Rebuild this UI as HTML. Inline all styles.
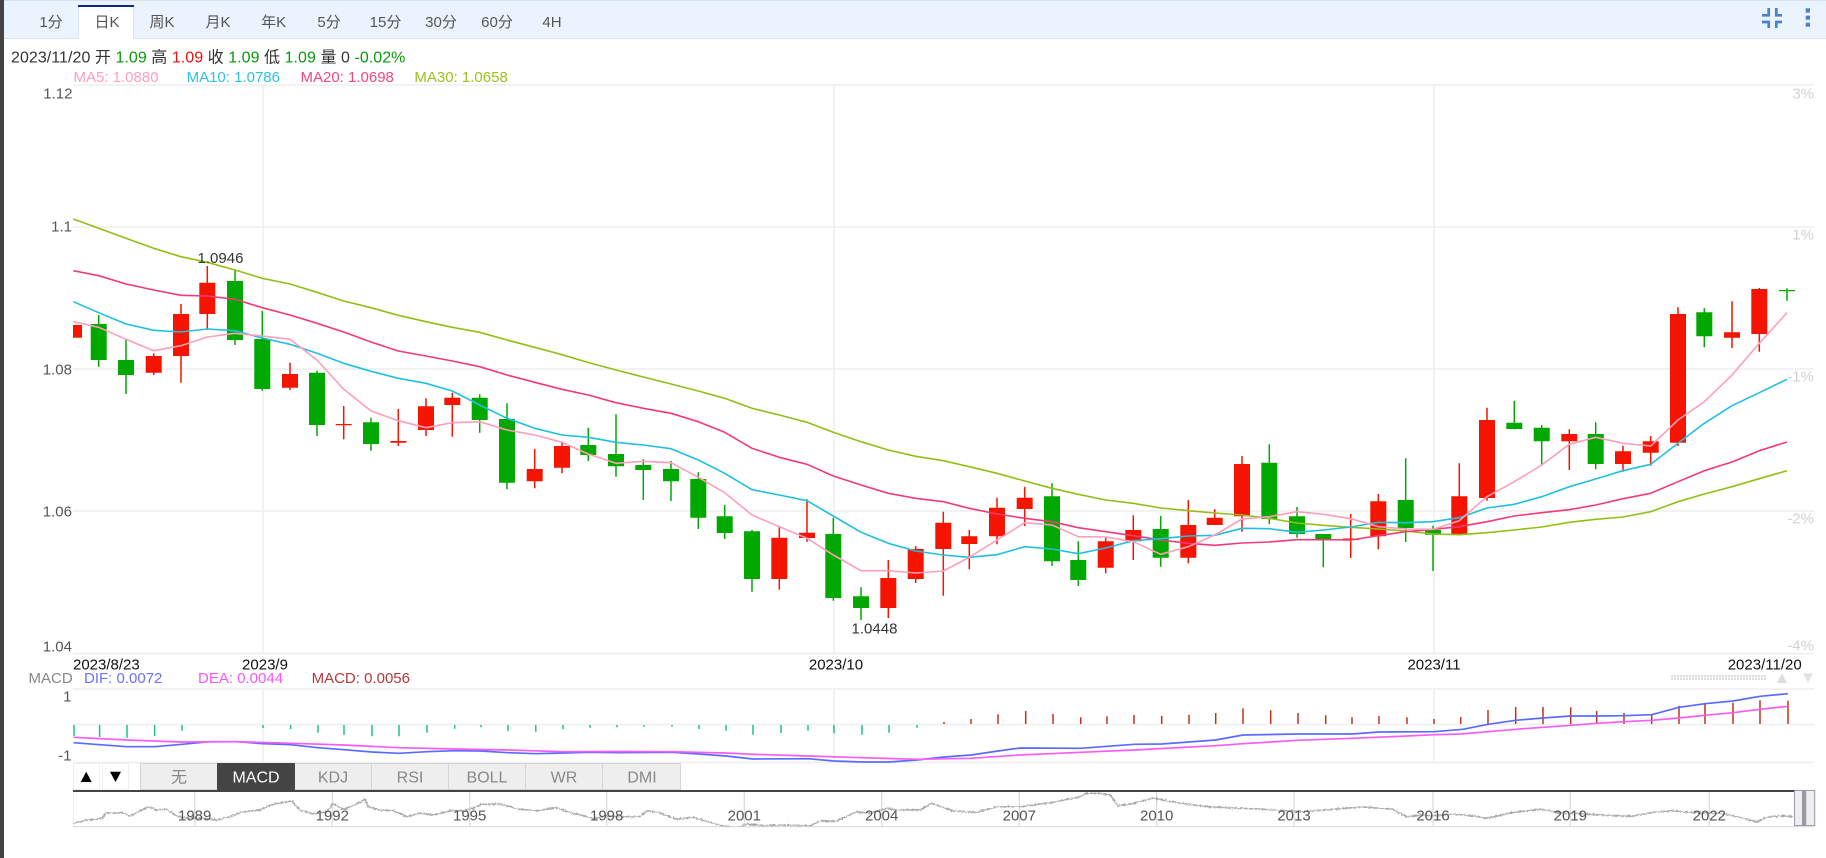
<!DOCTYPE html>
<html>
<head>
<meta charset="utf-8">
<style>
html,body{margin:0;padding:0;width:1826px;height:858px;background:#fff;overflow:hidden}
svg{display:block;position:absolute;left:0;top:0}
text{font-family:"Liberation Sans","Noto Sans CJK SC",sans-serif}
</style>
</head>
<body>
<svg width="1826" height="858" viewBox="0 0 1826 858" xmlns="http://www.w3.org/2000/svg">
<defs>
<clipPath id="navclip"><rect x="73" y="792" width="1722" height="34.5"/></clipPath>
<filter id="jit" filterUnits="userSpaceOnUse" x="60" y="780" width="1760" height="60">
<feTurbulence type="fractalNoise" baseFrequency="0.55" numOctaves="2" seed="4" result="n"/>
<feDisplacementMap in="SourceGraphic" in2="n" scale="3.5" xChannelSelector="R" yChannelSelector="G"/>
</filter>
<pattern id="dots" width="3" height="3" patternUnits="userSpaceOnUse"><rect width="2" height="2" fill="#dcdcdc"/></pattern>
</defs>

<rect x="0" y="0" width="4" height="858" fill="#444"/>

<!-- toolbar -->
<rect x="4" y="0" width="1822" height="38" fill="#ebf3fe"/>
<rect x="4" y="0" width="1822" height="1" fill="#d5e0f2"/>
<rect x="4" y="38" width="1822" height="1" fill="#d9e5f5"/>
<rect x="78" y="5" width="56" height="34" fill="#fff"/>
<rect x="78" y="5" width="1" height="34" fill="#d9e5f5"/>
<rect x="133" y="5" width="1" height="34" fill="#d9e5f5"/>
<rect x="78" y="5" width="56" height="2" fill="#0d2a85"/>
<g font-size="15" fill="#555" text-anchor="middle">
<text x="51" y="27">1分</text><text x="107" y="27">日K</text><text x="162" y="27">周K</text><text x="218" y="27">月K</text><text x="273.6" y="27">年K</text><text x="329" y="27">5分</text><text x="385.5" y="27">15分</text><text x="441" y="27">30分</text><text x="497" y="27">60分</text><text x="552" y="27">4H</text>
</g>
<!-- collapse icon -->
<path d="M1762 15.3H1768.7V8M1782 15.3H1776.3V8M1762 22H1768.7V28M1782 22H1776.3V28" fill="none" stroke="#4a80d0" stroke-width="2.7"/>
<rect x="1805.7" y="8.3" width="4.3" height="4.3" fill="#4a80d0"/>
<rect x="1805.7" y="15.7" width="4.3" height="4" fill="#4a80d0"/>
<rect x="1805.7" y="22.7" width="4.3" height="4" fill="#4a80d0"/>

<!-- info -->
<text x="11" y="62.5" font-size="16" fill="#333" letter-spacing="0.05" xml:space="preserve">2023/11/20 开 <tspan fill="#0a9a0a">1.09</tspan> 高 <tspan fill="#f01010">1.09</tspan> 收 <tspan fill="#0a9a0a">1.09</tspan> 低 <tspan fill="#0a9a0a">1.09</tspan> 量 0 <tspan fill="#0a9a0a">-0.02%</tspan></text>
<g font-size="15">
<text x="73.5" y="82" fill="#ff9ebf">MA5: 1.0880</text>
<text x="186.6" y="82" fill="#2bc4e0">MA10: 1.0786</text>
<text x="300.5" y="82" fill="#f5457f">MA20: 1.0698</text>
<text x="414.4" y="82" fill="#9ac21c">MA30: 1.0658</text>
</g>

<!-- grid -->
<g stroke="#eee" stroke-width="1.5" fill="none">
<path d="M73 85H1814M73 227H1814M73 369H1814M73 511H1814M73 653.5H1814"/>
<path d="M263 85V653M834 85V653M1434 85V653"/>
<path d="M73 689H1814M73 724.5H1814M73 762.5H1814"/>
<path d="M263 689V762M834 689V762M1434 689V762"/>
</g>

<!-- axis labels -->
<g font-size="15" fill="#555" text-anchor="end">
<text x="72.5" y="98.5">1.12</text>
<text x="72" y="231.5">1.1</text>
<text x="72" y="374.5">1.08</text>
<text x="72" y="516.5">1.06</text>
<text x="72" y="651.5">1.04</text>
<text x="71.5" y="701.5">1</text>
<text x="71.5" y="760.5">-1</text>
</g>
<g font-size="15" fill="#d2d2d2" text-anchor="end">
<text x="1814" y="98.5">3%</text>
<text x="1814" y="239.5">1%</text>
<text x="1814" y="381.5">-1%</text>
<text x="1814" y="523.5">-2%</text>
<text x="1814" y="650.5">-4%</text>
</g>

<!-- candles wicks -->
<path fill="none" stroke="#f51400" stroke-width="1.5" d="M153.7 353.3V375M181 304V382.7M207.3 266V330M290 362.7V390M343.7 406V439.3M398.3 409V446M426 398.3V436M452.3 392.7V436.7M534.7 449V488.3M562 441.7V473.3M779.3 526.7V589.7M807 499.3V541.7M888.3 560V618M915.7 546V583M943.3 511.7V595.7M969.3 530V569.3M997 497.7V544.3M1024.7 487V526M1105.7 537.7V573.3M1133.3 515.3V560M1188.3 500V563.3M1214.7 509.3V525M1242 456V531.7M1350.7 514V558M1378.3 494V549.3M1459.3 463.3V534M1487 407.7V500.7M1569.3 429.3V470M1623 445.7V471.7M1650.7 436V465.7M1678 307.3V446M1732 301.3V348M1759.3 288V351.7"/>
<path fill="none" stroke="#00a800" stroke-width="1.5" d="M98.7 315V366.7M126 340V394M235 269.3V345M262.3 311V390.7M317 370.7V436M371 417.7V450.7M479.7 394.3V432.7M507 403.3V489.3M588.3 427.7V461M616 414.3V476.7M643.3 459.3V500M671 461V501M698.3 472.3V529M724.7 505V539M752 530V591.7M833.3 517.7V600.7M861 587.3V620M1052 483.3V566M1078.3 541.3V586M1160.7 516V566.7M1269.3 444.3V524M1297 507V537.7M1323.3 534V567.3M1405.7 458.3V542M1433 525.7V571M1514.3 400.7V429.3M1541.7 425V465M1595.7 422.3V469.3M1704.3 308.3V347.3M1787 288.3V300.7"/>
<!-- candle bodies -->
<path fill="none" stroke="#f51400" stroke-width="16" d="M153.7 356V372.7M181 314V356M207.3 282.7V314M290 374V387.7M343.7 424V425.2M398.3 441V442.7M426 406.3V430M452.3 397.7V405M534.7 469V481.3M562 446V467.7M779.3 537.7V579M807 532.7V538M888.3 578V608M915.7 549V579M943.3 522.7V549M969.3 536.3V544M997 507.7V536.3M1024.7 497.7V509M1105.7 541.3V567.7M1133.3 530V541.3M1188.3 525V557.7M1214.7 517.7V525M1242 464V516.3M1350.7 538.5V540M1378.3 501.3V536.3M1459.3 496.3V534M1487 420V498M1569.3 434V441.3M1623 451.3V464M1650.7 441.3V452.7M1678 314V442.7M1732 332.3V337.7M1759.3 289V334"/>
<path fill="none" stroke="#f51400" stroke-width="9" d="M77.5 325V337.7"/>
<path fill="none" stroke="#00a800" stroke-width="16" d="M98.7 324V360M126 360V375M235 281V340M262.3 339V389M317 372.7V425M371 422.3V444M479.7 397.7V420M507 419V482.7M588.3 445V455M616 454V466.3M643.3 465V470M671 469V481.3M698.3 479V517.7M724.7 516.3V533M752 531.3V579M833.3 534V598M861 596.3V608M1052 496.3V561.3M1078.3 560V580M1160.7 529V557.7M1269.3 462.7V519M1297 516.3V534M1323.3 534V539.3M1405.7 500V528M1433 530V534.7M1514.3 422.7V429M1541.7 427.7V441.3M1595.7 434V464M1704.3 312.3V336.3M1787 290V291.3"/>

<!-- MA lines -->
<g fill="none" stroke-width="1.6" stroke-linejoin="round">
<polyline stroke="#93bf15" points="73.3,219 98.7,228.3 126,238.3 153.7,248.3 181,256.7 207.3,262.3 235,270 262.3,278.3 290,284 317,292.3 343.7,301 371,307.7 398.3,315.3 426,321.7 452.3,327.3 479.7,332.3 507,340 534.7,347.3 562,354.7 588.3,362.5 616,370 643.3,377 671,384 698.3,391 724.7,398.3 752,408.3 779.3,415 807,422.3 833.3,432.3 861,441.7 888.3,450 915.7,456.3 943.3,460.7 969.3,466.7 997,473.3 1024.7,481 1052,488.3 1078.3,494.3 1105.7,500 1133.3,503.3 1160.7,508 1188.3,510.7 1214.7,513 1242,515 1269.3,518.3 1297,523 1323.3,525.3 1350.7,527.3 1378.3,529 1405.7,531 1433,534 1459.3,534.7 1487,532.7 1514.3,530 1541.7,527 1569.3,522.3 1595.7,519.3 1623,517 1650.7,511.7 1678,501.7 1704.3,494 1732,486.7 1759.3,478.7 1787,470.7"/>
<polyline stroke="#f33a78" points="73.3,270.7 98.7,275.7 126,284 153.7,290 181,295.3 207.3,296 235,299.3 262.3,307.7 290,315 317,323.3 343.7,332 371,342 398.3,351 426,356 452.3,361 479.7,366.7 507,375 534.7,382.3 562,389.3 588.3,395 616,402.7 643.3,408.3 671,413.3 698.3,421.7 724.7,432.3 752,448.3 779.3,457.3 807,464.3 833.3,476 861,485 888.3,493.3 915.7,498.3 943.3,501.7 969.3,508.3 997,514 1024.7,518.3 1052,521.7 1078.3,527.7 1105.7,531.7 1133.3,535.7 1160.7,540 1188.3,543.3 1214.7,545.3 1242,543 1269.3,542 1297,539.7 1323.3,539.7 1350.7,540 1378.3,535.7 1405.7,531.7 1433,529.3 1459.3,526.7 1487,521.7 1514.3,516 1541.7,512.7 1569.3,509.7 1595.7,505 1623,498.7 1650.7,493.3 1678,481.7 1704.3,470.7 1732,462 1759.3,450.7 1787,442"/>
<polyline stroke="#1fc0e0" points="73.3,301.7 98.7,312.7 126,324 153.7,330.3 181,332 207.3,329 235,330.7 262.3,338 290,344.3 317,353.3 343.7,363.3 371,371.3 398.3,378.3 426,383.3 452.3,391 479.7,405 507,418.3 534.7,428.3 562,435 588.3,437.3 616,442.3 643.3,445 671,448.7 698.3,460 724.7,473.3 752,489.7 779.3,495 807,500.7 833.3,516 861,532.3 888.3,543.3 915.7,551 943.3,555 969.3,557.3 997,554.7 1024.7,546.7 1052,549 1078.3,553.7 1105.7,548 1133.3,540.7 1160.7,538.7 1188.3,536 1214.7,535.3 1242,528.3 1269.3,528.7 1297,532.3 1323.3,530 1350.7,527 1378.3,522.3 1405.7,522.7 1433,521.7 1459.3,517.7 1487,508 1514.3,504.3 1541.7,496.7 1569.3,486.7 1595.7,479 1623,470.7 1650.7,464.3 1678,443.3 1704.3,423.3 1732,405.7 1759.3,392.7 1787,379.3"/>
<polyline stroke="#ff9ebb" points="73.3,321.7 98.7,327.3 126,339.3 153.7,350.7 181,345.7 207.3,337 235,333.3 262.3,336 290,339.3 317,360 343.7,389.3 371,411 398.3,420.7 426,427.7 452.3,422.7 479.7,421.7 507,430 534.7,435 562,442.3 588.3,454 616,463.3 643.3,461.3 671,462.7 698.3,477.3 724.7,492.7 752,515 779.3,526.7 807,538.3 833.3,555 861,570.7 888.3,570.7 915.7,573 943.3,571 969.3,557.3 997,540 1024.7,522.7 1052,525 1078.3,536.7 1105.7,537 1133.3,541.7 1160.7,554.3 1188.3,546.7 1214.7,535 1242,519 1269.3,516.7 1297,511.7 1323.3,514.3 1350.7,518.7 1378.3,526.7 1405.7,529 1433,529.3 1459.3,520.7 1487,496.7 1514.3,481.7 1541.7,465 1569.3,444.3 1595.7,437.3 1623,443.3 1650.7,446 1678,420 1704.3,401.7 1732,375 1759.3,343.3 1787,312.7"/>
</g>

<text x="220.5" y="263" font-size="15" fill="#333" text-anchor="middle">1.0946</text>
<text x="874.5" y="633.5" font-size="15" fill="#333" text-anchor="middle">1.0448</text>

<!-- date axis -->
<g font-size="15" fill="#111">
<text x="73" y="669.5">2023/8/23</text>
<text x="265" y="669.5" text-anchor="middle">2023/9</text>
<text x="836" y="669.5" text-anchor="middle">2023/10</text>
<text x="1434" y="669.5" text-anchor="middle">2023/11</text>
<text x="1801.7" y="669.5" text-anchor="end">2023/11/20</text>
</g>
<rect x="1670" y="674" width="96" height="6" fill="url(#dots)"/>
<polygon points="1777,683 1787,683 1782,673.5" fill="#ddd"/>
<polygon points="1803,673.5 1813,673.5 1808,683" fill="#e2e2e2"/>

<!-- MACD legend -->
<g font-size="15">
<text x="28.5" y="683" fill="#888">MACD</text>
<text x="84" y="683" fill="#6a70ff">DIF: 0.0072</text>
<text x="198" y="683" fill="#f955f9">DEA: 0.0044</text>
<text x="311.6" y="683" fill="#b5393a">MACD: 0.0056</text>
</g>

<!-- MACD bars -->
<path fill="none" stroke="#1fbf8f" stroke-width="1.5" d="M74 725V736M99.6 725V737M127 725V737.7M154.6 725V736M182 725V730.7M263 725V728M290.6 725V729M318 725V732.7M344 725V734.7M372 725V736.3M399 725V736.3M427 725V732.7M454.7 725V728.7M481 725V727.3M508 725V731M535.8 725V731.7M563 725V729.3M590 725V727.7M617 725V727.3M644 725V726.7M672 725V726.7M699 725V729M726 725V730.7M753 725V734.7M781 725V733M808 725V730.7M834 725V733.3M862 725V734.7M889 725V732.7M917 725V727.7"/>
<path fill="none" stroke="#c23218" stroke-width="1.5" d="M944 724V722M971 724V719M998 724V714.3M1025.7 724V711M1053 724V714M1080.7 724V717.3M1107 724V716.3M1134 724V715M1161.7 724V716M1189 724V714.7M1215.7 724V713M1243 724V708.3M1270.7 724V710.3M1298 724V713M1325.7 724V715.3M1352 724V717.3M1379 724V716M1407 724V717.3M1434 724V719M1460.7 724V717M1488 724V710M1515.7 724V707M1543 724V707M1570.7 724V707.3M1596.7 724V711M1624 724V713M1651.7 724V714.3M1679 724V705.7M1705 724V703.3M1733 724V702.7M1760 724V700.3M1788 724V700.7"/>
<!-- MACD lines -->
<g fill="none" stroke-width="1.7" stroke-linejoin="round">
<polyline stroke="#5a6cff" points="73.5,742.7 99.6,744.7 127,746.7 154.6,746.7 182,744.3 209.6,741.7 237,741.7 263,743.7 290.6,744.7 318,747.7 344,749.7 372,752 399,753.3 427,751.7 454.7,750.7 481,751 508,752.7 535.8,753.7 563,753 590,752.3 620,752.7 672,752.3 699,754 726,756 753,759 808,758.7 834,761 862,762 889,762 917,760 944,757 971,755 998,751 1020,748 1080.7,748.3 1134,744.3 1161.7,744 1215.7,740 1243,735 1298,734 1352,734 1379,732 1434,731.7 1463,729.3 1488,724.3 1515.7,720.3 1543,718 1570.7,716 1596.7,716 1624,715.7 1651.7,714.7 1679,707.3 1705,703.7 1733,701 1760,696.3 1788,693.7"/>
<polyline stroke="#f95cf5" points="73.5,737.3 127,740 182,742 237,741.7 292.6,743.3 344,745 399,747.7 454.7,749 508,750 563,751.7 620,751.5 672,751.7 726,753 753,754.3 808,756 862,757.7 917,759.3 971,758.3 1020,755 1080.7,752.3 1134,750 1215.7,745.7 1243,743.7 1298,740.3 1352,738.3 1407,736 1434,734.7 1460.7,734 1488,731.7 1515.7,729.3 1543,727.3 1570.7,725.3 1596.7,723.3 1624,721.7 1651.7,720.3 1679,718 1705,715.3 1733,712.7 1760,709.3 1788,706.3"/>
</g>

<!-- indicator tabs -->
<rect x="73.5" y="763.5" width="26" height="26" fill="#fff" stroke="#f0f0f0"/>
<rect x="102.5" y="763.5" width="26" height="26" fill="#fff" stroke="#f0f0f0"/>
<polygon points="80.7,782 91.7,782 86.2,771.7" fill="#000"/>
<polygon points="110,771.7 121,771.7 115.5,782" fill="#000"/>
<g fill="#eee" stroke="#d5d5d5">
<rect x="140.5" y="763.5" width="77" height="26"/>
<rect x="294.5" y="763.5" width="77" height="26"/>
<rect x="371.5" y="763.5" width="77" height="26"/>
<rect x="448.5" y="763.5" width="77" height="26"/>
<rect x="525.5" y="763.5" width="77" height="26"/>
<rect x="602.5" y="763.5" width="78" height="26"/>
</g>
<rect x="217.5" y="763.5" width="77" height="26" fill="#444" stroke="#444"/>
<g font-size="16" fill="#888" text-anchor="middle">
<text x="179" y="782.5">无</text>
<text x="256" y="782.5" fill="#fff">MACD</text>
<text x="333" y="782.5">KDJ</text>
<text x="410" y="782.5">RSI</text>
<text x="487" y="782.5">BOLL</text>
<text x="564" y="782.5">WR</text>
<text x="642" y="782.5">DMI</text>
</g>

<!-- navigator -->
<rect x="73" y="790" width="1722" height="2" fill="#444"/>
<rect x="73" y="826" width="1741" height="1.2" fill="#ddd"/>
<rect x="73" y="792" width="1" height="34" fill="#eee"/>
<path stroke="#ddd" stroke-width="1.3" fill="none" d="M194.7 792V826M332.3 792V826M469.7 792V826M606.7 792V826M744.3 792V826M881.7 792V826M1019.3 792V826M1156.7 792V826M1294 792V826M1433 792V826M1570.3 792V826M1709.3 792V826"/>
<g clip-path="url(#navclip)">
<polyline filter="url(#jit)" fill="none" stroke="#aaa" stroke-width="1.5" points="73.3,823.3 80,821.7 86.7,820 96.7,819.3 103.3,817.3 106,812.7 113.3,813.3 121.7,812.3 130,816 138.3,811.7 148.3,806.7 156.7,810 166.7,809.3 175,815 181.7,817.3 193.3,818.3 203.3,818.3 216.7,820 230,816.7 243.3,811.7 260,810 273.3,804 291.7,801 300,810 313.3,814 326.7,811.7 333.3,804 343.3,809.3 355,805 365,799.3 368.3,806.7 380,810 393.3,810.7 406.7,816.7 420,813.3 433.3,815 450,810.7 463.3,810.7 473.3,808.3 481.7,804.3 500,804 520,809.3 536.7,810.7 556.7,807.7 570,812.7 580,815 593.3,818.3 606.7,816 623.3,816.7 640,816.7 646.7,810.7 658.3,812.3 676.7,819.3 693.3,817.3 713.3,823.3 721.7,825.7 736.7,828.3 746.7,824 763.3,825.7 780,825 810,826 820,821 836.7,821 856.7,811.7 870,813.3 886.7,808.3 896.7,810 920,810 931.7,803.3 953.3,811 976.7,812.3 996.7,806.7 1020,806.7 1053.3,802.3 1080,796.7 1086.7,793.3 1100,793.3 1110,795 1118,806 1135,803 1153,798 1182,803.5 1211,807 1258,809 1304,811.6 1362,807 1392,809 1406.7,816.7 1420,815 1433.3,816 1453.3,814 1473.3,816 1486.7,818.3 1513.3,812.3 1540,809.3 1560,812.7 1586.7,814 1613.3,815.7 1633.3,816 1653.3,812.3 1673.3,810.7 1693.3,812.7 1720,813.3 1740,817.3 1756.7,822 1766.7,817.3 1780,815.7 1794,816.7"/>
</g>
<g font-size="15" fill="#555" text-anchor="middle">
<text x="194.7" y="820.4">1989</text><text x="332.3" y="820.4">1992</text><text x="469.7" y="820.4">1995</text><text x="606.7" y="820.4">1998</text><text x="744.3" y="820.4">2001</text><text x="881.7" y="820.4">2004</text><text x="1019.3" y="820.4">2007</text><text x="1156.7" y="820.4">2010</text><text x="1294" y="820.4">2013</text><text x="1433" y="820.4">2016</text><text x="1570.3" y="820.4">2019</text><text x="1709.3" y="820.4">2022</text>
</g>
<rect x="1794.5" y="790.5" width="8" height="35" fill="#eee" stroke="#9a9aa8"/>
<rect x="1802.7" y="790" width="3" height="36" fill="#999"/>
<rect x="1805.7" y="790.5" width="9" height="35" fill="#eee" stroke="#9a9aa8"/>
</svg>
</body>
</html>
